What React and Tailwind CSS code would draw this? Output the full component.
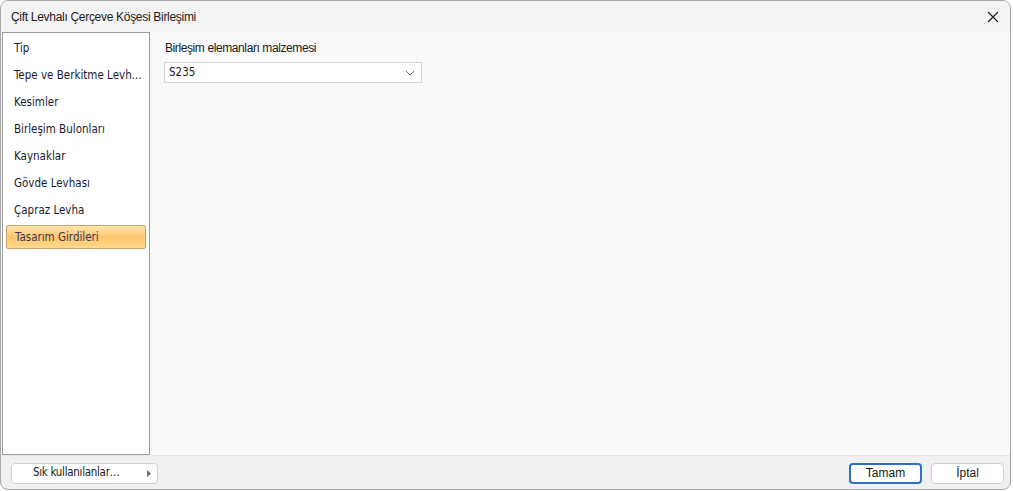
import { useState } from 'react'

const items = [
  'Tip',
  'Tepe ve Berkitme Levh...',
  'Kesimler',
  'Birleşim Bulonları',
  'Kaynaklar',
  'Gövde Levhası',
  'Çapraz Levha',
  'Tasarım Girdileri',
]

export default function App() {
  const [active, setActive] = useState(7)

  return (
    <div className="w-[1013px] h-[491px] bg-white" style={{ fontFamily: '"Liberation Sans", Arial, sans-serif' }}>
      <div className="w-[1011px] h-[490px] border border-[#a8a8a8] rounded-lg bg-[#f0f0f0] flex flex-col overflow-hidden">
        {/* title bar */}
        <div className="h-[31px] shrink-0 bg-[#f3f3f3] flex items-center justify-between pl-[10px] pr-[9px]">
          <span className="text-[12px] tracking-[-0.3px] text-[#1a1a1a]">Çift Levhalı Çerçeve Köşesi Birleşimi</span>
          <svg width="12" height="12" viewBox="0 0 12 12" className="mr-[2px]">
            <path d="M1 1 L11 11 M11 1 L1 11" stroke="#1a1a1a" strokeWidth="1.1" />
          </svg>
        </div>

        {/* body */}
        <div className="h-[424px] shrink-0 flex bg-[#f9f9f9] border-b border-[#e6e6e6]">
          <div className="w-[148px] ml-[1px] bg-white border border-[#9a9a9a] pt-[3px] px-[3px]" style={{ fontFamily: 'Tahoma, "DejaVu Sans Condensed", "Liberation Sans", sans-serif' }}>
            {items.map((t, i) => (
              <div
                key={t}
                onClick={() => setActive(i)}
                className={`h-[24px] mb-[3px] flex items-center pl-[8px] pt-[1px] text-[11.5px] text-[#1b1b2e] cursor-default ${
                  i === active
                    ? 'rounded-[2px] border border-[#c5a467] bg-gradient-to-b from-[#fde3b0] via-[#ffc56f] to-[#ffd98a] text-[#3b3b55] pt-0'
                    : ''
                }`}
              >
                {t}
              </div>
            ))}
          </div>
          <div className="flex-1 pl-[14px] pt-[9px]">
            <div className="text-[12px] tracking-[-0.4px] text-[#1a1a1a] leading-[14px] ml-[1px]">Birleşim elemanları malzemesi</div>
            <div className="mt-[7px] w-[258px] h-[21px] bg-white border border-[#d3d3d3] flex items-center justify-between pl-[4px] pr-[6px]">
              <span className="text-[11.5px] text-[#1a1a1a]" style={{ fontFamily: 'Tahoma, "DejaVu Sans Condensed", sans-serif' }}>S235</span>
              <svg width="10" height="6" viewBox="0 0 10 6">
                <path d="M1 1 L5 5 L9 1" fill="none" stroke="#777" strokeWidth="1" />
              </svg>
            </div>
          </div>
        </div>

        {/* footer */}
        <div className="flex-1 flex items-center justify-between pl-[10px] pr-[6px] pt-[1px]">
          <button className="w-[147px] h-[21px] bg-white border border-[#d2d2d2] rounded-[4px] flex items-center pr-[6px] pl-[21px] text-[11.5px] text-[#1a1a1a]" style={{ fontFamily: 'Tahoma, "DejaVu Sans Condensed", sans-serif' }}>
            <span className="flex-1 text-left tracking-[-0.3px]">Sık kullanılanlar…</span>
            <svg width="4" height="7" viewBox="0 0 4 7"><path d="M0 0 L4 3.5 L0 7 Z" fill="#707070" /></svg>
          </button>
          <div className="flex gap-[9px]">
            <button className="w-[73px] h-[21px] bg-white border-2 border-[#2a6fc9] rounded-[4px] text-[12px] text-[#1a1a1a] flex items-center justify-center">Tamam</button>
            <button className="w-[73px] h-[21px] bg-white border border-[#d0d0d0] rounded-[4px] text-[12px] text-[#1a1a1a] flex items-center justify-center">İptal</button>
          </div>
        </div>
      </div>
    </div>
  )
}
